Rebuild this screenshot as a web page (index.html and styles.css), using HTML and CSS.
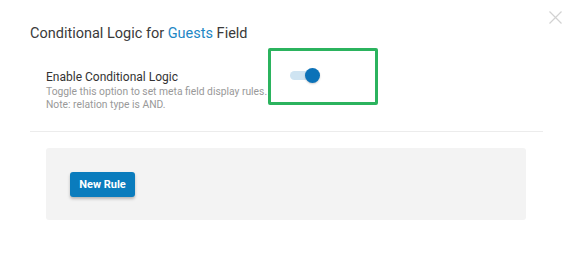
FILE: index.html
```html
<!DOCTYPE html>
<html>
<head>
<meta charset="utf-8">
<link rel="stylesheet" href="styles.css">
</head>
<body>
<div class="modal">
  <button class="close" aria-label="Close">
    <svg width="13" height="13" viewBox="0 0 13 13"><path d="M0.5 0.5L12.5 12.5M12.5 0.5L0.5 12.5" stroke="#d2d2d2" stroke-width="1.2" fill="none"/></svg>
  </button>
  <h2 class="title">Conditional Logic for <span class="accent">Guests</span> Field</h2>
  <div class="setting">
    <div class="setting-text">
      <div class="setting-label">Enable Conditional Logic</div>
      <div class="setting-help">Toggle this option to set meta field display rules.</div>
      <div class="setting-help">Note: relation type is AND.</div>
    </div>
    <div class="toggle-wrap">
      <span class="toggle"><span class="knob"></span></span>
      <span class="highlight"></span>
    </div>
  </div>
  <div class="divider"></div>
  <div class="rules">
    <button class="btn">New Rule</button>
  </div>
</div>
</body>
</html>
```
FILE: styles.css
```css
* { box-sizing: border-box; }
html, body { margin: 0; padding: 0; background: #fff; }
body { font-family: Roboto, "Noto Sans", sans-serif; width: 574px; height: 268px; overflow: hidden; }
.modal { position: relative; padding: 25px 31px 0 30px; }
.close { position: absolute; top: 11px; left: 549px; padding: 0; margin: 0; border: 0; background: none; width: 13px; height: 13px; display: block; }
.close svg { display: block; }
.title { margin: 0; font-size: 14.5px; line-height: 18px; font-weight: 400; color: #3a3a3a; }
.accent { color: #1e87c5; }
.setting { display: flex; align-items: flex-start; padding: 27px 0 0 16px; height: 88px; }
.setting-text { width: 244px; }
.setting-label { font-size: 12px; line-height: 14px; color: #333; margin-bottom: 1px; }
.setting-help { font-size: 10.3px; line-height: 13px; color: #999; white-space: nowrap; }
.toggle-wrap { position: relative; padding-top: 1px; }
.toggle { position: relative; display: block; width: 28px; height: 9px; border-radius: 5px; background: #cfe4f2; }
.knob { position: absolute; top: -3px; left: 15px; width: 15px; height: 15px; border-radius: 50%; background: #0b72b8; box-shadow: 0 1px 2px rgba(0,0,0,.2); }
.highlight { position: absolute; left: -22px; top: -22px; width: 110px; height: 57px; border: 3px solid #2bb35e; border-radius: 2px; }
.divider { height: 1px; background: #ececec; }
.rules { margin: 16px 17px 0 16px; height: 72px; background: #f3f3f3; border-radius: 3px; padding: 24px 0 0 24px; }
.btn { display: block; width: 65px; height: 25px; border: 0; border-radius: 3px; background: #0a7cbd; color: #fff; font-family: Roboto, sans-serif; font-weight: 700; font-size: 11px; padding: 0; box-shadow: 0 2px 3px rgba(0,0,0,.25); }
```
